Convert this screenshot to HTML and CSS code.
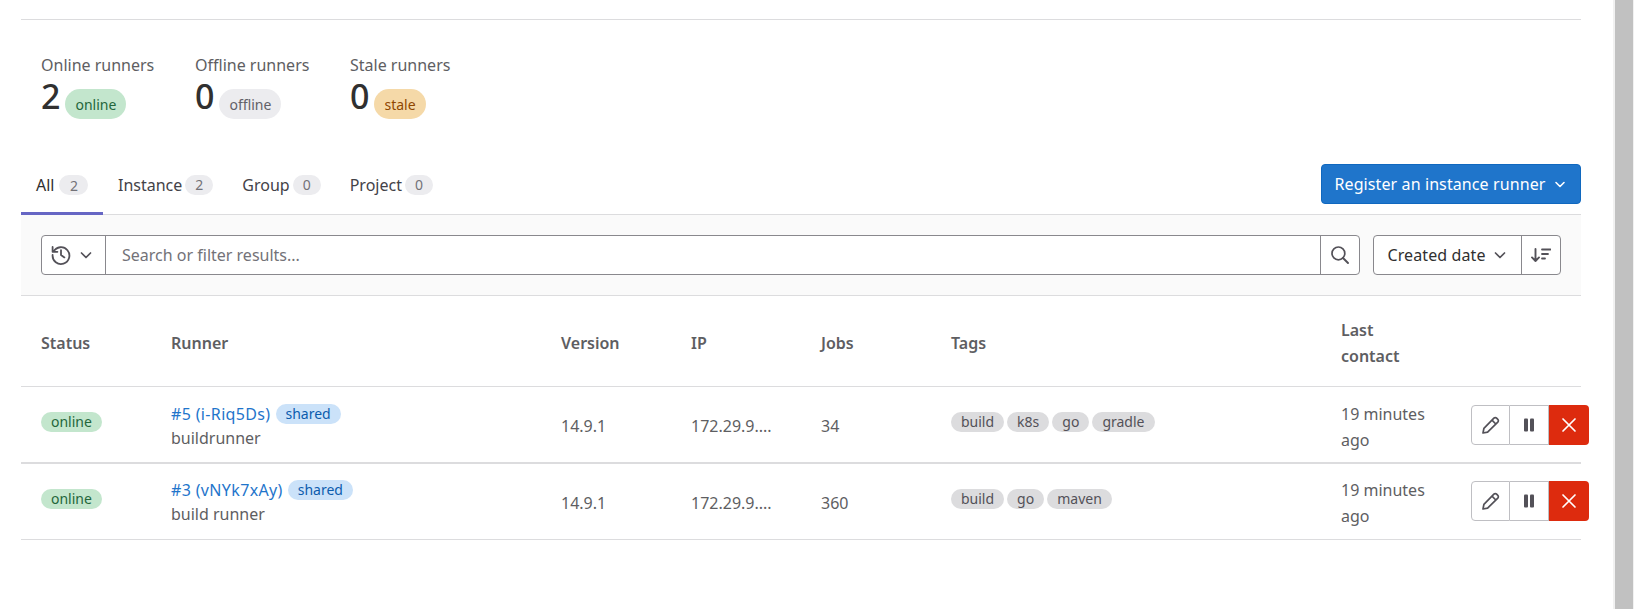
FILE: index.html
```html
<!DOCTYPE html>
<html lang="en">
<head>
<meta charset="utf-8">
<title>Runners</title>
<link rel="stylesheet" href="styles.css">
</head>
<body>
<div class="page">
<main class="content">
  <section class="stats">
    <div class="stat"><div class="stat-label">Online runners</div><div class="stat-value"><span class="num">2</span><span class="badge big green">online</span></div></div>
    <div class="stat s2"><div class="stat-label">Offline runners</div><div class="stat-value"><span class="num">0</span><span class="badge big grey">offline</span></div></div>
    <div class="stat s3"><div class="stat-label">Stale runners</div><div class="stat-value"><span class="num">0</span><span class="badge big orange">stale</span></div></div>
  </section>
  <nav class="tabs">
    <a class="tab active">All<span class="count">2</span></a>
    <a class="tab">Instance<span class="count">2</span></a>
    <a class="tab">Group<span class="count">0</span></a>
    <a class="tab">Project<span class="count">0</span></a>
    <button class="register">Register an instance runner<svg class="ico" viewBox="0 0 16 16"><path d="M4 6.5l4 4 4-4" fill="none" stroke="currentColor" stroke-width="1.6" stroke-linecap="round" stroke-linejoin="round"/></svg></button>
  </nav>
  <div class="filterbar">
    <div class="search">
      <div class="hist">
        <svg class="ico hist-i" viewBox="0 0 20 20"><path d="M2.6 6.6A8.4 8.4 0 1 1 1.6 10M1.6 2v4.8h4.8M10 5.2V10l3.4 2.4" fill="none" stroke="currentColor" stroke-width="1.8" stroke-linecap="round" stroke-linejoin="round"/></svg>
        <svg class="ico" viewBox="0 0 16 16"><path d="M3.5 6l4.5 4.5L12.5 6" fill="none" stroke="currentColor" stroke-width="1.7" stroke-linecap="round" stroke-linejoin="round"/></svg>
      </div>
      <div class="placeholder">Search or filter results...</div>
      <div class="go"><svg class="ico big-i" viewBox="0 0 18 18"><circle cx="7.4" cy="7.4" r="6.4" fill="none" stroke="currentColor" stroke-width="1.7"/><path d="M12 12l5 5" fill="none" stroke="currentColor" stroke-width="1.9" stroke-linecap="round"/></svg></div>
    </div>
    <div class="sort">
      <div class="sort-by">Created date<svg class="ico" viewBox="0 0 16 16"><path d="M3.5 6l4.5 4.5L12.5 6" fill="none" stroke="currentColor" stroke-width="1.7" stroke-linecap="round" stroke-linejoin="round"/></svg></div>
      <div class="sort-dir"><svg class="ico sort-i" viewBox="0 0 20 14"><path d="M4.5 1v12M1 9.4L4.5 13 8 9.4" fill="none" stroke="currentColor" stroke-width="1.9" stroke-linecap="round" stroke-linejoin="round"/><path d="M11 1.5h8.5M11 6h6M11 10.5h3" fill="none" stroke="currentColor" stroke-width="1.8" stroke-linecap="round"/></svg></div>
    </div>
  </div>
  <table class="runners">
    <colgroup><col class="c1"><col class="c3"><col class="c1"><col class="c1"><col class="c1"><col class="c3"><col class="c1"><col class="c1"></colgroup>
    <thead><tr><th>Status</th><th>Runner</th><th>Version</th><th>IP</th><th>Jobs</th><th>Tags</th><th>Last contact</th><th></th></tr></thead>
    <tbody>
      <tr class="first">
        <td class="status"><span class="badge green">online</span></td>
        <td class="runner"><div class="rid"><a>#5 (i-Riq5Ds)</a><span class="badge blue">shared</span></div><div class="rname">buildrunner</div></td>
        <td class="plain">14.9.1</td><td class="plain">172.29.9....</td><td class="plain">34</td>
        <td class="tags"><span class="badge tag">build</span><span class="badge tag">k8s</span><span class="badge tag">go</span><span class="badge tag">gradle</span></td>
        <td class="contact">19 minutes ago</td>
        <td class="acts"><div class="group">
          <button class="act"><svg class="ico big-i" viewBox="0 0 18 18"><path d="M1 17l.9-4.6L11.9 2.2a1.9 1.9 0 0 1 2.7 0l1.2 1.2a1.9 1.9 0 0 1 0 2.7L5.6 16.1zM10 4.2l3.8 3.8" fill="none" stroke="currentColor" stroke-width="1.7" stroke-linejoin="round"/></svg></button>
          <button class="act"><svg class="ico big-i" viewBox="0 0 18 18"><rect x="4" y="2.5" width="4" height="13" rx="1" fill="currentColor"/><rect x="10" y="2.5" width="4" height="13" rx="1" fill="currentColor"/></svg></button>
          <button class="act del"><svg class="ico big-i" viewBox="0 0 18 18"><path d="M3 3l12 12M15 3L3 15" fill="none" stroke="currentColor" stroke-width="1.7" stroke-linecap="round"/></svg></button>
        </div></td>
      </tr>
      <tr class="second">
        <td class="status"><span class="badge green">online</span></td>
        <td class="runner"><div class="rid"><a>#3 (vNYk7xAy)</a><span class="badge blue">shared</span></div><div class="rname">build runner</div></td>
        <td class="plain">14.9.1</td><td class="plain">172.29.9....</td><td class="plain">360</td>
        <td class="tags"><span class="badge tag">build</span><span class="badge tag">go</span><span class="badge tag">maven</span></td>
        <td class="contact">19 minutes ago</td>
        <td class="acts"><div class="group">
          <button class="act"><svg class="ico big-i" viewBox="0 0 18 18"><path d="M1 17l.9-4.6L11.9 2.2a1.9 1.9 0 0 1 2.7 0l1.2 1.2a1.9 1.9 0 0 1 0 2.7L5.6 16.1zM10 4.2l3.8 3.8" fill="none" stroke="currentColor" stroke-width="1.7" stroke-linejoin="round"/></svg></button>
          <button class="act"><svg class="ico big-i" viewBox="0 0 18 18"><rect x="4" y="2.5" width="4" height="13" rx="1" fill="currentColor"/><rect x="10" y="2.5" width="4" height="13" rx="1" fill="currentColor"/></svg></button>
          <button class="act del"><svg class="ico big-i" viewBox="0 0 18 18"><path d="M3 3l12 12M15 3L3 15" fill="none" stroke="currentColor" stroke-width="1.7" stroke-linecap="round"/></svg></button>
        </div></td>
      </tr>
    </tbody>
  </table>
</main>
<div class="scrollbar"><div class="thumb"></div></div>
</div>
</body>
</html>
```
FILE: styles.css
```css
* { box-sizing: border-box; }
html, body { margin: 0; height: 100%; overflow: hidden; }
body { background: #fff; font-family: "Noto Sans", "Open Sans", sans-serif; font-size: 16px; color: #5e5e62; }
.page { display: flex; height: 609px; }
.content { flex: 1; padding: 0 32px 0 21px; min-width: 0; }
.scrollbar { width: 21px; background: #f1f1f1; padding: 0 1px 0 2px; }
.thumb { height: 100%; background: #c1c1c1; }

.stats { border-top: 1px solid #dcdcde; margin-top: 19px; padding: 33px 20px 0; display: flex; height: 120px; }
.stat { width: 154px; }
.s2 { width: 155px; }
.stat-label { font-size: 16px; line-height: 24px; color: #5e5e62; }
.stat-value { display: flex; align-items: flex-end; height: 42px; }
.num { font-size: 34px; line-height: 40px; color: #303030; font-weight: 500; margin-right: 5px; margin-bottom: 3px; }

.badge { display: inline-flex; align-items: center; justify-content: center; height: 20px; border-radius: 10px; font-size: 14px; padding: 0 10px; white-space: nowrap; }
.badge.big { height: 30px; border-radius: 15px; padding: 0 10px; }
.green { background: #c3e6cd; color: #24663b; }
.grey { background: #ececef; color: #626168; }
.orange { background: #f5d9a8; color: #8f4700; }
.blue { background: #cbe2f9; color: #0b5cad; margin-left: 5px; }
.tag { background: #dcdcde; color: #535158; padding: 0 10px; margin-right: 3px; }

.tabs { display: flex; align-items: center; height: 76px; border-bottom: 1px solid #dcdcde; }
.tab { display: flex; align-items: center; height: 100%; padding: 16px 14.5px 0; color: #434248; font-size: 16px; }
.tab.active { color: #303030; border-bottom: 3px solid #6666c4; margin-bottom: -1px; padding: 19px 15px 0; }
.count { display: inline-flex; align-items: center; justify-content: center; width: 28px; height: 20px; border-radius: 10px; background: #ececef; color: #737278; font-size: 14px; margin-left: 3px; }
.active .count { width: 29px; margin-left: 5px; }
.register { margin: 15px 0 0 auto; width: 260px; height: 40px; background: #1f75cb; color: #fff; border: 1px solid #1068bf; border-radius: 4px; font: inherit; font-size: 16px; letter-spacing: .1px; display: flex; align-items: center; justify-content: center; gap: 6px; padding: 0; }
.ico { width: 16px; height: 16px; flex: none; display: block; }
.big-i { width: 18px; height: 18px; }
.sort-i { width: 20px; height: 14px; }

.filterbar { height: 81px; background: #fafafa; border-bottom: 1px solid #dcdcde; padding: 20px 20px 0; display: flex; justify-content: space-between; }
.search, .sort { display: flex; height: 40px; background: #fff; border: 1px solid #89888d; border-radius: 4px; }
.search { width: 1319px; }
.hist { width: 64px; padding-right: 2px; border-right: 1px solid #89888d; display: flex; align-items: center; justify-content: center; gap: 7px; color: #535158; }
.hist-i { width: 20px; height: 20px; }
.placeholder { flex: 1; padding-left: 16px; line-height: 38px; font-size: 16px; color: #737278; }
.go { width: 39px; border-left: 1px solid #89888d; display: flex; align-items: center; justify-content: center; color: #535158; }
.sort { width: 188px; }
.sort-by { width: 148px; border-right: 1px solid #89888d; display: flex; align-items: center; justify-content: center; gap: 6px; font-size: 16px; letter-spacing: .1px; color: #303030; }
.sort-dir { flex: 1; display: flex; align-items: center; justify-content: center; color: #535158; }
.sort-by .ico { color: #535158; }

.runners { width: 1560px; table-layout: fixed; border-collapse: separate; border-spacing: 0; }
.c1 { width: 130px; }
.c3 { width: 390px; }
th { height: 91px; padding: 3px 20px 0; text-align: left; vertical-align: middle; font-size: 16px; font-weight: 600; line-height: 26px; color: #5e5e62; border-bottom: 1px solid #dcdcde; }
td { height: 76px; padding: 0 20px; vertical-align: top; border-bottom: 1px solid #dcdcde; font-size: 16px; line-height: 26px; }
.first td { height: 77px; border-bottom-width: 2px; }
.status, .tags { padding-top: 25px; white-space: nowrap; font-size: 0; }
.runner { padding-top: 15px; }
.rid { display: flex; align-items: center; height: 24px; }
.rid a { color: #1f75cb; letter-spacing: .35px; }
.rname { line-height: 24px; }
.plain { padding-top: 26px; }
.contact { padding-top: 14px; }
.acts { padding-top: 18px; }
.second .runner { padding-top: 14px; }
.second .contact { padding-top: 13px; }
.second .acts { padding-top: 17px; }
.group { display: flex; width: 118px; }
.act { width: 39px; height: 40px; padding: 0; background: #fff; border: 1px solid #bfbfc3; border-left-width: 0; color: #535158; display: flex; align-items: center; justify-content: center; }
.act:first-child { border-left-width: 1px; border-radius: 4px 0 0 4px; }
.act.del { background: #dd2b0e; border-color: #c91c00; border-width: 0; border-radius: 0 4px 4px 0; color: #fff; width: 40px; }
```
